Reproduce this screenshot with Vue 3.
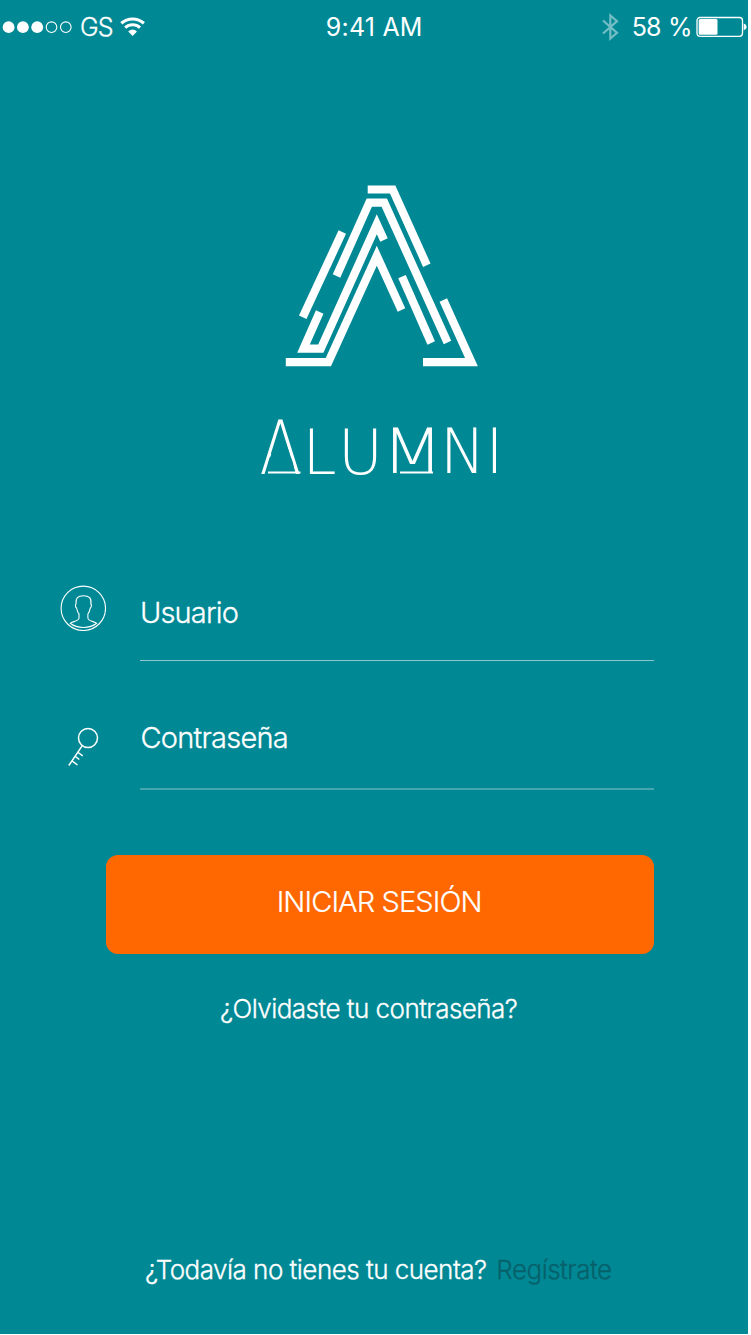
<script setup>
const dots = [true, true, true, false, false]
const letters = [
  { ch: 'A', x: 259.5, y: 473.5, size: 75, width: 42 },
  { ch: 'L', x: 302.5, y: 473.5, size: 63, width: 34 },
  { ch: 'U', x: 338, y: 473.5, size: 63, width: 45 },
  { ch: 'M', x: 381.5, y: 473, size: 63, width: 62 },
  { ch: 'N', x: 440, y: 473, size: 63, width: 45.5 },
  { ch: 'I', x: 485.5, y: 473, size: 63, width: 18 },
]
</script>

<template>
  <main class="screen">
    <header class="status">
      <div class="carrier">
        <svg class="signal" width="72" height="14" viewBox="0 0 72 14">
          <circle v-for="(on, i) in dots" :key="i" :cx="6.6 + i * 14.3" cy="7.2"
            :r="on ? 5.9 : 5.3" :fill="on ? '#fff' : 'none'" stroke="#fff" :stroke-width="on ? 0 : 1.1" />
        </svg>
        <span class="network">GS</span>
        <svg class="wifi" width="26" height="20" viewBox="0 0 26 20" fill="none" stroke="#fff">
          <path d="M1.3 6.3a17 17 0 0 1 22.6 0" stroke-width="3.2" />
          <path d="M5.2 10.7a11 11 0 0 1 14.8 0" stroke-width="3" />
          <path d="M8.200 14.500q4.400-3.900 8.800 0L12.600 19z" fill="#fff" stroke="none" />
        </svg>
      </div>
      <time class="clock">9:41 AM</time>
      <div class="power">
        <svg class="bluetooth" width="17" height="28" viewBox="0 0 17 28" fill="none" stroke="#73bdc4" stroke-width="2.2">
          <path d="M1 7.5 15 19.8 8.3 25.5V2.5l6.7 5.7L1 20.5" />
        </svg>
        <span class="percent">58 %</span>
        <svg class="battery" width="52" height="22" viewBox="0 0 52 22">
          <rect x="1" y="1.5" width="45.5" height="18.8" rx="3" fill="none" stroke="#fff" stroke-width="1.3" />
          <rect x="2.7" y="3.1" width="18.8" height="15.6" rx="1.5" fill="#fff" />
          <path d="M47.7 7.5q3 1 3 3.4t-3 3.4z" fill="#fff" />
        </svg>
      </div>
    </header>

    <svg class="brand" width="300" height="320" viewBox="230 180 300 320" role="img" aria-label="Alumni">
      <g fill="none" stroke="#fff" stroke-width="8.2" stroke-miterlimit="10">
        <path d="M367.7 189.500H392.700L426.800 265.200" />
        <path d="M336.500 276 369.300 202.700H384.300L447.500 342.500" />
        <path d="M342.300 232 302.700 317.300" />
        <path d="M384 240 376.800 224.200 320.800 348.700H303.500L319.700 312" />
        <path d="M285.800 362.200H328.300L376.800 255.700 401.500 310" />
        <path d="M402 276.700 431.200 343" />
        <path d="M443.300 300 471.500 362.200H423" />
      </g>
      <g class="wordmark">
        <text v-for="l in letters" :key="l.ch" :x="l.x" :y="l.y" :font-size="l.size"
          :textLength="l.width" lengthAdjust="spacingAndGlyphs">{{ l.ch }}</text>
      </g>
      <path d="M280.500 428 268.500 462V471H294.500L293 463Z" fill="#008995" />
      <path d="M268 472.600H300.500M400 472.500H433" stroke="#fff" stroke-width="2" />
    </svg>

    <form class="login" @submit.prevent>
      <label class="field user">
        <svg class="icon" width="46" height="46" viewBox="0 0 46 46" fill="none" stroke="#fff" stroke-width="1.1">
          <circle cx="23.3" cy="23.3" r="22.2" />
          <path d="M10.3 38.3c2-2 8.200-1.700 8.700-5.300v-4c-1.700-1.800-2-4-2.400-6-1.200-.7-1.500-3-.6-4-.6-5.700 1.800-8.300 7.500-8.300s8.200 2.600 7.400 8.300c1 1 .5 3.300-.6 4-.4 2-.8 4.200-2.400 6v4c.5 3.600 6.700 3.300 8.700 5.300-7 5.600-19.300 5.600-26.300 0z" />
          <path d="M10.300 38.300q13 3.200 26.300 0" stroke="none" />
        </svg>
        <span>Usuario</span>
      </label>
      <label class="field pass">
        <svg class="icon" width="46" height="46" viewBox="0 0 46 46" fill="none" stroke="#fff" stroke-width="1.5">
          <circle cx="28" cy="15" r="9.5" />
          <path d="M22.300 22.600 8.800 42.500M17.500 29l5.200 3.800M14.800 33l4.500 3.500M11.500 37.500l6 4.500" />
        </svg>
        <span>Contraseña</span>
      </label>
      <button class="submit" type="submit">INICIAR SESIÓN</button>
    </form>
    <a class="forgot">¿Olvidaste tu contraseña?</a>
    <p class="signup"><span class="ask">¿Todavía no tienes tu cuenta?</span> <a class="join">Regístrate</a></p>
  </main>
</template>

<style>
body { background: #fff; }
</style>

<style scoped>
.screen {
  box-sizing: border-box;
  width: 747.5px;
  height: 1334.3px;
  overflow: hidden;
  display: flex;
  flex-direction: column;
  background: #008995;
  color: #fff;
  font-family: Inter, "Liberation Sans", sans-serif;
  font-weight: 300;
}
svg { display: block; flex: none; }
.status {
  height: 54px;
  display: grid;
  grid-template-columns: 1fr auto 1fr;
  align-items: center;
  font-size: 25px;
  line-height: 54px;
  font-weight: 400;
}
.carrier, .power { display: flex; align-items: center; }
.carrier { padding-left: 2px; }
.network { margin-left: 6px; letter-spacing: -0.8px; font-weight: 300; -webkit-text-stroke: 0.3px; }
.wifi { margin-left: 7px; }
.clock { letter-spacing: 0.2px; padding-left: 1px; }
.power { justify-content: flex-end; }
.percent { margin: 0 5px 0 12.5px; letter-spacing: -1px; word-spacing: 1.5px; }
.battery { margin-left: -1px; }
.brand { margin: 126px 0 0 230px; }
.wordmark {
  font-family: "DejaVu Sans", sans-serif;
  font-weight: 200;
  fill: #fff;
}
.login { display: flex; flex-direction: column; }
.field {
  display: flex;
  font-size: 29px;
  line-height: 40px;
  letter-spacing: -0.85px;
  margin-left: 60px;
}
.field span, .forgot, .signup { -webkit-text-stroke: 0.3px; }
.field span {
  box-sizing: border-box;
  width: 514px;
  margin-left: 34px;
  border-bottom: 1px solid #8cc9ce;
}
.user { height: 76px; margin-top: 85px; }
.user span { height: 76px; padding-top: 8px; }
.pass { height: 129px; }
.pass .icon { margin-top: 62px; }
.pass span { height: 129px; padding: 57px 0 0 0.5px; border-bottom: 2px solid #45a6af; letter-spacing: -0.78px; }
.submit {
  width: 548.3px;
  height: 99.5px;
  margin: 64.5px 0 0 106px;
  padding: 0 2px 5px 0;
  border: 0;
  border-radius: 12px;
  background: #ff6700;
  color: #fff;
  font: 300 29px/40px Inter, sans-serif;
  letter-spacing: -0.9px;
  -webkit-text-stroke: 0.2px;
}
.forgot { margin: 35px 0 0 220px; font-size: 26px; line-height: 40px; letter-spacing: -0.54px; }
.signup { margin: 221px 0 0 145px; font-size: 26px; line-height: 40px; letter-spacing: -0.52px; white-space: nowrap; }
.join { margin-left: 3px; color: #07616b; }
</style>
